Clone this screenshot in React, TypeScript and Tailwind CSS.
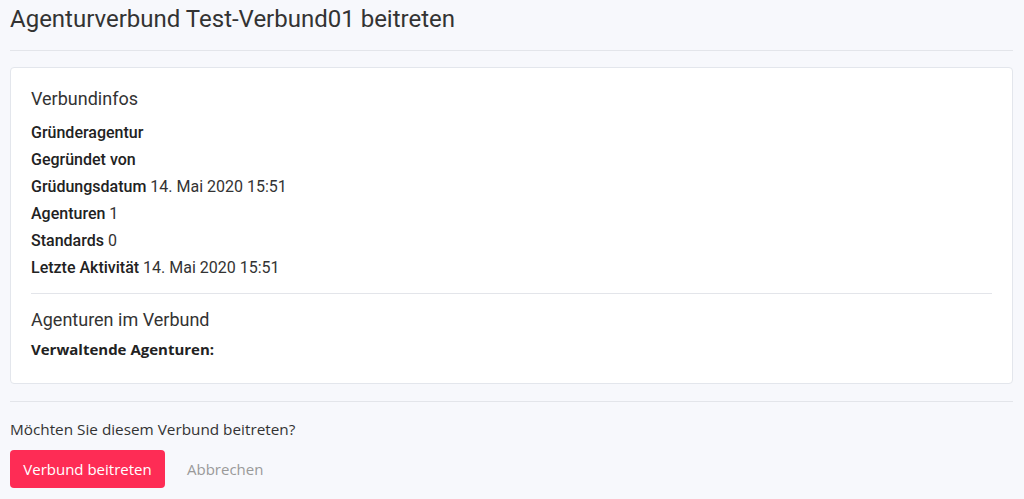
export default function App() {
  const rows: [string, string][] = [
    ["Grüdungsdatum", "14. Mai 2020 15:51"],
    ["Agenturen", "1"],
    ["Standards", "0"],
    ["Letzte Aktivität", "14. Mai 2020 15:51"],
  ];

  return (
    <div className="min-h-[499px] bg-[#f7f8fc] px-[10px] pr-[11px] text-[#212529] font-['Roboto',sans-serif]">
      <h1 className="pt-[5px] h-[50px] text-[24px] leading-[28px] text-[#333]">
        Agenturverbund Test-Verbund01 beitreten
      </h1>
      <hr className="border-t border-[#e3e5ea]" />

      <div className="mt-4 rounded border border-[#e3e6ec] bg-white px-5 pt-[19px] pb-[22px]">
        <h2 className="text-[18px] leading-6 text-[#333]">Verbundinfos</h2>
        <div className="mt-[8px] text-[16px] leading-[27px] text-[#333]">
          <div className="font-medium text-[#222]">Gründeragentur</div>
          <div className="font-medium text-[#222]">Gegründet von</div>
          {rows.map(([k, v]) => (
            <div key={k}>
              <span className="font-medium text-[#222]">{k}</span> {v}
            </div>
          ))}
        </div>
        <hr className="mt-[12px] border-t border-[#e3e5ea]" />
        <h2 className="mt-[14px] text-[18px] leading-6 text-[#333]">Agenturen im Verbund</h2>
        <div className="mt-[5px] font-['Open_Sans',sans-serif] text-[15px] font-bold leading-6 text-[#222]">
          Verwaltende Agenturen:
        </div>
      </div>

      <hr className="mt-[17px] border-t border-[#e3e5ea]" />
      <p className="mt-[16px] font-['Open_Sans',sans-serif] text-[15.3px] leading-[22px] text-[#333]">
        Möchten Sie diesem Verbund beitreten?
      </p>
      <div className="mt-[10px] flex items-center gap-[22px] font-['Open_Sans',sans-serif] text-[15px]">
        <button className="h-[38px] w-[155px] rounded bg-[#fe2c55] text-white">Verbund beitreten</button>
        <button className="text-[#9a9a9a]">Abbrechen</button>
      </div>
    </div>
  );
}
